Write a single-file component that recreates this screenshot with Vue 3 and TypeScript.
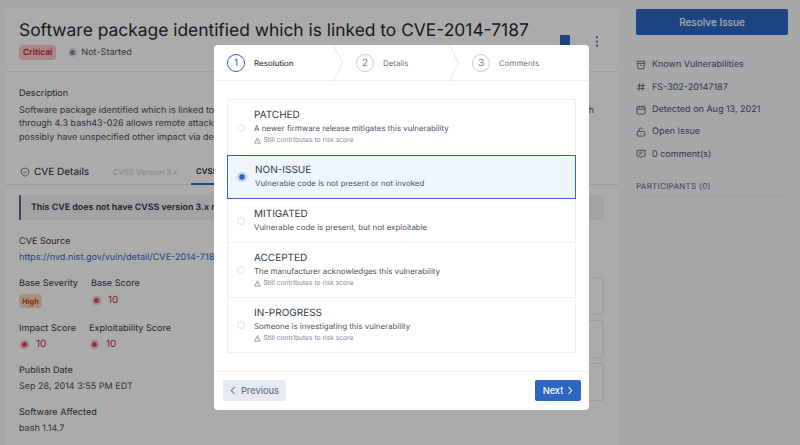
<script setup lang="ts">
interface Option { name: string; desc: string; risk: boolean; selected?: boolean }
const options: Option[] = [
  { name: 'PATCHED', desc: 'A newer firmware release mitigates this vulnerability', risk: true },
  { name: 'NON-ISSUE', desc: 'Vulnerable code is not present or not invoked', risk: false, selected: true },
  { name: 'MITIGATED', desc: 'Vulnerable code is present, but not exploitable', risk: false },
  { name: 'ACCEPTED', desc: 'The manufacturer acknowledges this vulnerability', risk: true },
  { name: 'IN-PROGRESS', desc: 'Someone is investigating this vulnerability', risk: true },
]
const steps = [
  { n: 1, label: 'Resolution', active: true },
  { n: 2, label: 'Details', active: false },
  { n: 3, label: 'Comments', active: false },
]
</script>

<template>
  <div class="page">
    <main class="card">
      <header class="head">
        <div class="title-row">
          <h1>Software package identified which is linked to CVE-2014-7187</h1>
          <div class="actions">
            <span class="bookmark"></span>
            <svg class="kebab" width="4" height="11" viewBox="0 0 4 11"><circle cx="2" cy="1.300" r="1.100"/><circle cx="2" cy="5.500" r="1.100"/><circle cx="2" cy="9.700" r="1.100"/></svg>
          </div>
        </div>
        <div class="meta">
          <span class="badge critical">Critical</span>
          <span class="status"><i class="dot"></i>Not-Started</span>
        </div>
      </header>
      <section class="desc">
        <div class="label">Description</div>
        <p>Software package identified which is linked to an off-by-one error in the read_token_word function in the parse.y code file of GNU Bash<br />through 4.3 bash43-026 allows remote attackers to cause a denial of service (out-of-bounds array access and application crash) or<br />possibly have unspecified other impact via deeply nested for loops, aka the "word_lineno" issue.</p>
      </section>
      <nav class="tabs">
        <span class="tab-main">
          <svg width="10" height="10" viewBox="0 0 24 24" fill="none" stroke="#5c6066" stroke-width="2"><path d="M12 2.500 21 6v6c0 5-4 8-9 10-5-2-9-5-9-10V6z"/><path d="M8 12l3 3 5-6"/></svg>
          CVE Details
        </span>
        <span class="tab-dim">CVSS Version 3.x</span>
        <span class="tab-active">CVSS Version 2.0</span>
      </nav>
      <div class="alert">This CVE does not have CVSS version 3.x metrics</div>
      <div class="body">
        <div class="fields">
          <div class="field">
            <div class="label">CVE Source</div>
            <a class="link">https://nvd.nist.gov/vuln/detail/CVE-2014-7187</a>
          </div>
          <div class="pair first">
            <div class="sev">
              <div class="label">Base Severity</div>
              <span class="badge high">High</span>
            </div>
            <div>
              <div class="label">Base Score</div>
              <div class="score"><i></i>10</div>
            </div>
          </div>
          <div class="pair second">
            <div class="imp">
              <div class="label">Impact Score</div>
              <div class="score"><i></i>10</div>
            </div>
            <div>
              <div class="label">Exploitability Score</div>
              <div class="score"><i></i>10</div>
            </div>
          </div>
          <div class="field">
            <div class="label">Publish Date</div>
            <div class="value">Sep 28, 2014 3:55 PM EDT</div>
          </div>
          <div class="field">
            <div class="label">Software Affected</div>
            <div class="value">bash 1.14.7</div>
          </div>
        </div>
        <div class="boxes">
          <div class="box"></div>
          <div class="box"></div>
          <div class="box"></div>
        </div>
      </div>
    </main>

    <aside class="side">
      <button class="resolve">Resolve Issue</button>
      <ul class="info">
        <li>
          <svg viewBox="0 0 16 16"><rect x="1.500" y="2" width="13" height="3.500" rx=".8"/><path d="M3 5.500V13a1 1 0 0 0 1 1h8a1 1 0 0 0 1-1V5.500M6 8.500h4"/></svg>
          Known Vulnerabilities
        </li>
        <li>
          <svg viewBox="0 0 16 16"><path d="M6 2 4.500 14M11.500 2 10 14M2 5.800h12.500M1.500 10.200H14"/></svg>
          FS-302-20147187
        </li>
        <li>
          <svg viewBox="0 0 16 16"><rect x="1.500" y="2.500" width="13" height="12" rx="1.500"/><path d="M5 1v3M11 1v3M1.500 6.500h13"/></svg>
          Detected on Aug 13, 2021
        </li>
        <li>
          <svg viewBox="0 0 16 16"><rect x="2" y="7" width="12" height="7.500" rx="1.200"/><path d="M4.800 7V4.600a3.100 3.100 0 0 1 6-1.100M8 10.200v1"/></svg>
          Open Issue
        </li>
        <li>
          <svg viewBox="0 0 16 16"><path d="M2.500 2h11a1 1 0 0 1 1 1v7.500a1 1 0 0 1-1 1H10L8 14l-2-2.500H2.500a1 1 0 0 1-1-1V3a1 1 0 0 1 1-1z"/><path d="M5 5.200h6M5 8h4"/></svg>
          0 comment(s)
        </li>
      </ul>
      <div class="participants">PARTICIPANTS (0)</div>
    </aside>

    <div class="overlay">
      <div class="modal">
        <div class="steps">
          <div v-for="s in steps" :key="s.n" class="step" :class="{ active: s.active }">
            <span class="circle">{{ s.n }}</span>
            <span class="step-label">{{ s.label }}</span>
            <svg v-if="s.n < 3" class="chev" width="10" height="36" viewBox="0 0 10 36" fill="none"><path d="M0.500 0 9.500 18 0.500 36" stroke="#e4e8f0"/></svg>
          </div>
        </div>
        <div class="content">
          <div class="options">
            <div v-for="o in options" :key="o.name" class="option" :class="{ selected: o.selected }">
              <span class="radio"></span>
              <div class="text">
                <div class="name">{{ o.name }}</div>
                <div class="sub">{{ o.desc }}</div>
                <div v-if="o.risk" class="risk">
                  <svg width="7" height="7" viewBox="0 0 12 12" fill="none" stroke="#7d8798" stroke-width="1.300"><path d="M6 1.200 11 10.500H1zM6 4.800v2.500M6 8.600v.4"/></svg>
                  Still contributes to risk score
                </div>
              </div>
            </div>
          </div>
        </div>
        <footer class="foot">
          <button class="prev">
            <svg width="6" height="9" viewBox="0 0 6 9" fill="none" stroke="#67748a" stroke-width="1.100"><path d="M4.500 1 1.300 4.500 4.500 8"/></svg>
            Previous
          </button>
          <button class="next">
            Next
            <svg width="6" height="9" viewBox="0 0 6 9" fill="none" stroke="#fff" stroke-width="1.100"><path d="M1.500 1 4.700 4.500 1.500 8"/></svg>
          </button>
        </footer>
      </div>
    </div>
  </div>
</template>

<style>
html, body { margin: 0; height: 445px; overflow: hidden; background: #f8f9fb; }
</style>

<style scoped>
* { box-sizing: border-box; }
.page {
  display: flex;
  width: 800px;
  height: 445px;
  overflow: hidden;
  padding: 9px 12px 0 6px;
  gap: 18px;
  font-family: Inter, "Noto Sans", sans-serif;
  color: #2f3236;
  text-rendering: geometricPrecision;
}
.card {
  width: 612px;
  height: 480px;
  flex: none;
  background: #fff;
  border-radius: 4px;
}
.head {
  height: 63px;
  padding: 12px 13px 0;
  border-bottom: 1px solid #eceef1;
}
.title-row { display: flex; justify-content: space-between; align-items: flex-start; height: 20px; }
h1 {
  margin: 0;
  font-size: 17.400px;
  line-height: 20px;
  font-weight: 400;
  color: #22262c;
  white-space: nowrap;
}
.actions { display: flex; align-items: center; gap: 25px; padding-top: 14px; padding-right: 6px; }
.bookmark { width: 10px; height: 12px; background: #2e65c2; border-radius: 1px; }
.kebab { fill: #2e65c2; }
.meta { display: flex; align-items: center; gap: 14px; margin-top: 4px; }
.badge {
  display: inline-flex;
  align-items: center;
  font-size: 8.500px;
  font-weight: 600;
  border-radius: 4px;
}
.critical { height: 15px; padding: 0 4px; background: #f9c6cc; color: #c81e30; }
.status { display: flex; align-items: center; font-size: 9.100px; color: #4e5460; }
.dot { width: 5px; height: 5px; margin-right: 6px; border-radius: 50%; background: #7f8ba2; box-shadow: 0 0 0 2px #e2e6ee; }
.desc { padding: 15px 13px 0; height: 83px; }
.label { font-size: 9.100px; line-height: 14px; color: #33373d; }
.desc p {
  margin: 3px 0 0;
  font-size: 9px;
  line-height: 13.400px;
  color: #4a4e54;
  white-space: nowrap;
}
.tabs {
  display: flex;
  align-items: center;
  height: 30px;
  padding: 4px 0 0 14px;
  border-bottom: 1px solid #e6e8ec;
}
.tab-main { display: flex; align-items: center; gap: 4px; font-size: 10px; color: #22262c; width: 93px; }
.tab-dim { font-size: 7.800px; color: #c2c6cc; width: 78px; }
.tab-active {
  font-size: 7.800px;
  font-weight: 600;
  height: 26px;
  line-height: 24px;
  color: #22262c;
  padding: 0 5px;
  border-bottom: 2px solid #2e65c2;
}
.alert {
  margin: 10px 14px 0 13px;
  height: 25px;
  padding-left: 10px;
  border-left: 2px solid #5a6a8f;
  background: #f2f3f5;
  font-size: 8.900px;
  font-weight: 600;
  line-height: 25px;
  color: #2b2e33;
  white-space: nowrap;
  overflow: hidden;
}
.body { display: flex; justify-content: space-between; padding: 15px 14px 0 13px; }
.fields { display: flex; flex-direction: column; gap: 10px; }
.field { height: 32px; }
.link { display: block; font-size: 9.100px; line-height: 18px; color: #2e65c2; white-space: nowrap; }
.value { font-size: 9px; line-height: 18px; color: #4a4e54; white-space: nowrap; }
.pair { display: flex; }
.pair.first { height: 35px; }
.pair.second { height: 32px; }
.sev { width: 72px; }
.imp { width: 70px; }
.high { display: flex; width: max-content; height: 14px; margin-top: 3px; padding: 0 3px; font-size: 7.500px; background: #fbd5b8; color: #c03222; }
.score { display: flex; align-items: center; font-size: 10px; line-height: 18px; color: #c81e30; }
.pair.second .score { margin-top: -1px; }
.score i { width: 5px; height: 5px; margin: 0 9px 0 3px; border-radius: 50%; background: #e2445c; box-shadow: 0 0 0 2.500px #f8d0d6; }
.boxes { display: flex; flex-direction: column; gap: 5px; margin-top: 42px; }
.box { width: 200px; height: 38px; border: 1px solid #e9eaed; border-radius: 2px; }
.side { width: 152px; flex: none; }
.resolve {
  width: 100%;
  height: 26px;
  border: none;
  border-radius: 2px;
  background: #2e65c2;
  color: #fff;
  font: 500 10px Inter, sans-serif;
}
.info { list-style: none; margin: 18.600px 0 0; padding: 0; }
.info li {
  display: flex;
  align-items: center;
  gap: 6px;
  height: 22.400px;
  font-size: 9px;
  color: #4c5360;
  white-space: nowrap;
}
.info svg { width: 10px; height: 10px; flex: none; fill: none; stroke: #4c5360; stroke-width: 1.300; }
.participants {
  margin-top: 15.400px;
  padding-bottom: 4px;
  font-size: 8px;
  letter-spacing: .3px;
  color: #5f6776;
  border-bottom: 1px solid #e9ebef;
}
.overlay {
  position: absolute;
  inset: 0;
  width: 800px;
  height: 445px;
  background: rgba(0, 0, 0, .33);
  padding: 45px 211px 0 214px;
}
.modal {
  height: 365px;
  background: #fff;
  border-radius: 4px;
  display: flex;
  flex-direction: column;
}
.steps { display: flex; height: 36px; padding-left: 13px; border-bottom: 1px solid #eef1f6; }
.step { display: flex; align-items: center; position: relative; width: 116px; }
.step:first-child { width: 129px; }
.circle {
  width: 18px;
  height: 18px;
  border-radius: 50%;
  border: 1px solid #c4cede;
  display: flex;
  align-items: center;
  justify-content: center;
  font-size: 10px;
  color: #7a8394;
  margin-right: 9px;
  flex: none;
}
.step-label { font-size: 7.900px; color: #6b7482; }
.step.active .circle { border-color: #2e65c2; color: #2e65c2; }
.step.active .step-label { color: #3a4252; font-weight: 500; }
.chev { position: absolute; right: 13px; top: 0; }
.content { flex: 1; padding: 18px 13px 0; }
.options { border: 1px solid #eef0f5; border-radius: 1px; }
.option {
  display: flex;
  align-items: center;
  padding-left: 9px;
  border-bottom: 1px solid #eef0f5;
}
.option:last-child { border-bottom: none; }
.option:nth-child(1) { height: 56px; }
.option:nth-child(2) { height: 43px; }
.option:nth-child(3) { height: 44px; }
.option:nth-child(4) { height: 55px; }
.option:nth-child(5) { height: 54px; }
.option.selected {
  margin: -1px -1px 0;
  height: 44px;
  padding-left: 10px;
  background: #eef5fd;
  border: 1px solid #2e65c2;
}
.radio {
  width: 8px;
  height: 8px;
  border-radius: 50%;
  border: 1px solid #dfe3ea;
  margin-right: 9px;
  flex: none;
}
.selected .radio { border: 1.500px solid #eef5fd; background: #2e65c2; box-shadow: 0 0 0 1px #b7c9e8; }
.name { font-size: 10px; line-height: 13px; color: #333a48; }
.option:first-child .name { margin-top: -1px; }
.sub { font-size: 7.900px; line-height: 13px; color: #4b5362; white-space: nowrap; }
.risk { display: flex; align-items: center; gap: 2.500px; font-size: 6.700px; line-height: 10px; color: #7d8798; }
.foot {
  height: 39px;
  border-top: 1px solid #eef1f6;
  display: flex;
  justify-content: space-between;
  padding: 8px 8px 0 9px;
}
button { cursor: pointer; }
.prev, .next {
  height: 21px;
  border: none;
  border-radius: 2px;
  display: flex;
  align-items: center;
  justify-content: center;
  font: 500 9.200px Inter, sans-serif;
}
.prev { width: 63px; gap: 5px; background: #e6ebf3; color: #67748a; }
.next { width: 46px; gap: 4px; background: #2e65c2; color: #fff; }
</style>
